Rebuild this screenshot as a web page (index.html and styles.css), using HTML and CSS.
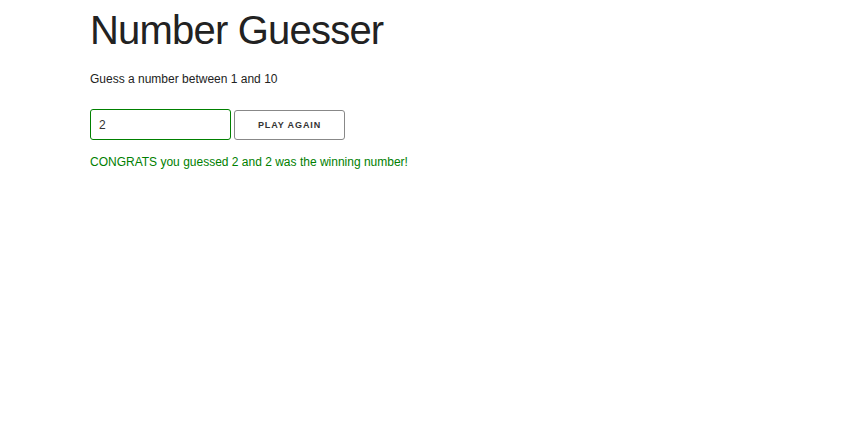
FILE: index.html
```html
<!DOCTYPE html>
<html>
<head>
<meta charset="utf-8">
<link rel="stylesheet" href="styles.css">
</head>
<body>
<div class="container">
  <h1 class="title">Number Guesser</h1>
  <p class="intro">Guess a number between <span class="min-num">1</span> and <span class="max-num">10</span></p>
  <div class="controls">
    <input class="guess-input" type="number" value="2">
    <button class="guess-btn">PLAY AGAIN</button>
  </div>
  <p class="message">CONGRATS you guessed 2 and 2 was the winning number!</p>
</div>
</body>
</html>
```
FILE: styles.css
```css
html, body {
  margin: 0;
  padding: 0;
  background: #fff;
}
body {
  font-family: "Liberation Sans", Arial, sans-serif;
  color: #222;
}
.container {
  padding: 0 0 0 90px;
}
.title {
  margin: 0;
  padding-top: 6px;
  font-size: 40px;
  font-weight: 300;
  letter-spacing: -0.8px;
  line-height: 48px;
  color: #222;
}
.intro {
  margin: 17px 0 0;
  font-size: 12px;
  line-height: 16px;
  color: #222;
}
.controls {
  display: flex;
  align-items: center;
  gap: 3px;
  margin-top: 22px;
}
.guess-input {
  box-sizing: border-box;
  width: 141px;
  height: 31px;
  margin: 0;
  padding: 0 8px;
  border: 1px solid green;
  border-radius: 3px;
  font-family: "Liberation Sans", Arial, sans-serif;
  font-size: 12px;
  color: #333;
  outline: none;
  -moz-appearance: textfield;
}
.guess-input::-webkit-outer-spin-button,
.guess-input::-webkit-inner-spin-button {
  -webkit-appearance: none;
  margin: 0;
}
.guess-btn {
  box-sizing: border-box;
  width: 111px;
  height: 30px;
  margin: 0;
  padding: 0;
  border: 1px solid #888;
  border-radius: 3px;
  background: transparent;
  font-family: "Liberation Sans", Arial, sans-serif;
  font-size: 9px;
  font-weight: 700;
  letter-spacing: 0.9px;
  color: #333;
}
.message {
  margin: 14px 0 0;
  font-size: 12px;
  line-height: 16px;
  color: green;
}
```
